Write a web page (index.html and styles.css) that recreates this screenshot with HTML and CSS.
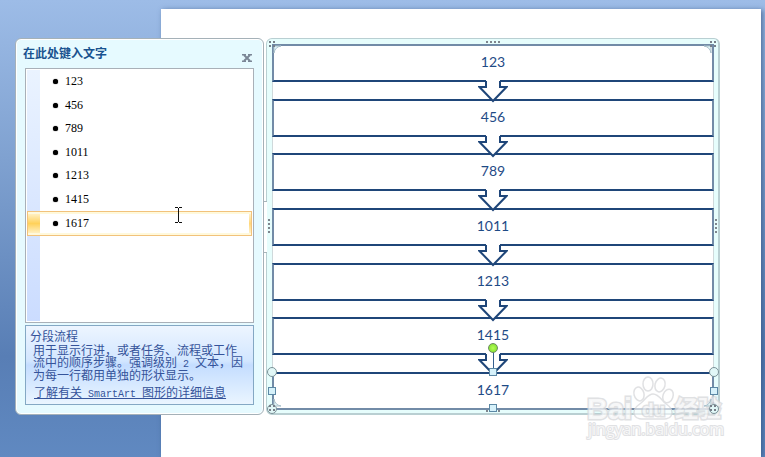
FILE: index.html
```html
<!DOCTYPE html>
<html lang="zh-CN">
<head>
<meta charset="utf-8">
<title>SmartArt</title>
<link rel="stylesheet" href="styles.css">
</head>
<body>
<div class="sheet"></div>
<main class="workspace">
  <section class="pane">
    <header class="pane-head">
      <h1>在此处键入文字</h1>
      <button class="close" type="button" aria-label="关闭">
        <svg width="10" height="8" viewBox="0 0 10 8"><path d="M0 .7h4M6 .7h4M0 7.300h4M6 7.300h4" stroke="#7b8696" stroke-width="1.400"/><path d="M2 1l6 6M8 1l-6 6" stroke="#7b8696" stroke-width="2"/></svg>
      </button>
    </header>
    <div class="editor">
      <ul class="bullets">
        <li>123</li>
        <li>456</li>
        <li>789</li>
        <li>1011</li>
        <li>1213</li>
        <li>1415</li>
        <li class="active">1617</li>
      </ul>
      <svg class="caret" width="7" height="16" viewBox="0 0 7 16"><path d="M0 .5h3M4 .5h3M3.500 1v14M0 15.500h3M4 15.500h3" stroke="#111" fill="none"/></svg>
    </div>
    <div class="info">
      <h2>分段流程</h2>
      <p>用于显示行进，或者任务、流程或工作<br>流中的顺序步骤。强调级别<span class="latin"> 2 </span>文本，因<br>为每一行都用单独的形状显示。</p>
      <a href="#">了解有关<span class="latin"> SmartArt </span>图形的详细信息</a>
    </div>
  </section>
  <section class="frame">
    <ol class="steps">
      <li>123<svg class="arrow" viewBox="0 0 30 23"><use href="#arrow"/></svg></li>
      <li>456<svg class="arrow" viewBox="0 0 30 23"><use href="#arrow"/></svg></li>
      <li>789<svg class="arrow" viewBox="0 0 30 23"><use href="#arrow"/></svg></li>
      <li>1011<svg class="arrow" viewBox="0 0 30 23"><use href="#arrow"/></svg></li>
      <li>1213<svg class="arrow" viewBox="0 0 30 23"><use href="#arrow"/></svg></li>
      <li>1415<svg class="arrow" viewBox="0 0 30 23"><use href="#arrow"/></svg></li>
      <li class="selected">1617
        <i class="stem"></i><i class="rotate"></i>
        <i class="handle square n"></i><i class="handle square s"></i>
        <i class="handle square w"></i><i class="handle square e"></i>
        <i class="handle round nw"></i><i class="handle round ne"></i>
        <i class="handle round sw"></i><i class="handle round se"></i>
      </li>
    </ol>
    <i class="nub"></i>
    <svg class="grip top" width="15" height="3"><use href="#dots"/></svg>
    <svg class="grip bottom" width="15" height="3"><use href="#dots"/></svg>
    <svg class="grip left" width="3" height="15"><use href="#vdots"/></svg>
    <svg class="grip right" width="3" height="15"><use href="#vdots"/></svg>
    <svg class="corner tl" width="12" height="12"><use href="#corner"/></svg>
    <svg class="corner tr" width="12" height="12"><use href="#corner"/></svg>
    <svg class="corner bl" width="12" height="12"><use href="#corner"/></svg>
    <svg class="corner br" width="12" height="12"><use href="#corner"/></svg>
  </section>
</main>
<svg class="watermark" width="144" height="70" viewBox="0 0 144 70">
  <g fill="#fff" fill-opacity=".75" stroke="#d9dadd" stroke-width="1.500">
    <ellipse cx="56" cy="20" rx="5" ry="7" transform="rotate(-15 56 20)"/>
    <ellipse cx="65" cy="10" rx="5" ry="7"/>
    <ellipse cx="77" cy="11" rx="5" ry="7" transform="rotate(15 77 11)"/>
    <ellipse cx="85" cy="22" rx="5" ry="7" transform="rotate(20 85 22)"/>
    <path d="M70 20c-5 0-7 5-12 9-6 4-9 8-6 13 2 4 8 3 18 3s16 1 18-3c3-5 0-9-6-13-4-4-7-9-12-9z"/>
    <g paint-order="stroke" stroke-width="3">
      <text class="wm-bold" x="4" y="45" font-size="29">Bai</text>
      <text class="wm-bold" x="59" y="42" font-size="19">du</text>
      <text class="wm-cjk" x="92" y="43" font-size="23">经验</text>
      <text class="wm-url" x="5" y="61" font-size="16" stroke-width="2">jingyan.baidu.com</text>
    </g>
  </g>
</svg>
<svg width="0" height="0" class="defs">
  <defs>
    <g id="arrow"><path d="M8 0h14v4H8z" fill="#fff"/><path d="M8 1v6H1.500L15 21 28.500 7H22V1" fill="#fff" stroke="#1f4679" stroke-width="2"/></g>
    <path id="dots" d="M0 0h2v2H0zM4 0h2v2H4zM8 0h2v2H8zM12 0h2v2h-2z" fill="#7f858d"/>
    <path id="vdots" d="M0 0h2v2H0zM0 4h2v2H0zM0 8h2v2H0zM0 12h2v2H0z" fill="#7f858d"/>
    <g id="corner"><path d="M5 5h7Q6 6 5 12z" fill="#e4f8fa" stroke="#a9bfc9"/><path d="M0 0h2v2H0zM4 0h2v2H4zM0 4h2v2H0zM4 4h2v2H4z" fill="#777f89"/></g>
  </defs>
</svg>
</body>
</html>
```
FILE: styles.css
```css
* { box-sizing: border-box; }
body {
  margin: 0;
  min-height: 100vh;
  display: grid;
  grid-template: 9px 1fr / 161px 1fr 4px;
  overflow: hidden;
  background: linear-gradient(#9dbce7, #7fa1d0 35%, #587eb5 78%, #6089c1);
  font-family: "Liberation Serif", "Noto Sans CJK SC", serif;
  font-size: 12px;
}
h1, h2, p, ul, ol { margin: 0; padding: 0; font-weight: normal; }
ul, ol { list-style: none; }
.sheet {
  grid-area: 2 / 2;
  background: #fff;
  box-shadow: 2px 1px 5px #2b4a78aa;
}
.workspace {
  grid-area: 1 / 1 / -1 / -1;
  position: relative;
  display: flex;
  gap: 2px;
  padding: 38px 45px 42px 15px;
}

.pane {
  flex: 0 0 249px;
  display: flex;
  flex-direction: column;
  padding: 0 9px 9px;
  border: 1px solid #a5b1b8;
  border-radius: 6px;
  background: #e6faff;
  box-shadow: inset 0 0 0 1px #fff;
}
.pane-head {
  display: flex;
  justify-content: space-between;
  height: 29px;
  padding: 0 2px 0 0;
  margin-left: -2px;
}
.pane-head h1 {
  font: bold 12px/28px "Noto Sans CJK SC", sans-serif;
  color: #19528f;
}
.close {
  align-self: center;
  margin-top: 8px;
  padding: 0;
  border: 0;
  background: none;
}
.close svg { display: block; }
.editor {
  position: relative;
  flex: 1;
  padding: 1px;
  border: 1px solid #a9b0b8;
  background:
    linear-gradient(#eaf3ff, #cbdcff) 1px 1px / 13px calc(100% - 2px) no-repeat,
    #fff;
}
.bullets {
  display: flex;
  flex-direction: column;
  justify-content: space-between;
  height: 166px;
}
.bullets li {
  display: flex;
  align-items: center;
  gap: 7px;
  height: 23px;
  padding-left: 26px;
}
.bullets li::before {
  content: "";
  width: 5px;
  height: 5px;
  border-radius: 50%;
  background: #000;
  box-shadow: 0 0 1px #000;
}
.bullets .active {
  height: 25px;
  padding-left: 25px;
  border: 1px solid #f2c27b;
  background:
    linear-gradient(#fff6d8, #ffd15a, #fff6d8) left / 12px 100% no-repeat,
    linear-gradient(#fff6d8, #ffd77a, #fff6d8) right / 2px 100% no-repeat,
    #fff;
  box-shadow: inset 0 2px #fff9dc, inset 0 -2px #fff9dc;
}
.caret { position: absolute; left: 149px; top: 138px; }
.info {
  height: 80px;
  margin-top: 2px;
  padding: 2px 4px;
  border: 1px solid #84a8c4;
  background: linear-gradient(#edf5ff, #d2e6ff 45%, #c4ddff 50%, #eaf5ff);
  color: #35539a;
  font: 12px/12px "Noto Sans CJK SC", sans-serif;
  white-space: nowrap;
}
.info h2 { font-size: 12px; line-height: 16px; }
.info p { padding-left: 3px; }
.info a {
  display: inline-block;
  margin: 2px 0 0 4px;
  line-height: 18px;
  color: inherit;
}
.latin {
  font-family: "Liberation Mono", monospace;
  font-size: 10px;
  line-height: 8px;
  white-space: pre;
}

.frame {
  position: relative;
  flex: 1;
  display: flex;
  padding: 5px 4px 3px 5px;
  border: 1px solid #b9cfd2;
  border-width: 1px 2px 2px 1px;
  border-radius: 6px;
  background: #e6fdfc;
}
.steps {
  flex: 1;
  display: flex;
  flex-direction: column;
  justify-content: space-between;
  background: #fff;
  border: solid #cfd9db;
  border-width: 0 1px;
}
.steps li {
  position: relative;
  height: 38px;
  margin: 0 -1px;
  border: 2px solid #1f4679;
  border-left-color: #728ba7;
  border-right-color: #728ba7;
  color: #1f4b86;
  font: 14px/32px Lato, sans-serif;
  text-align: center;
}
.steps li:first-child { border-top-color: #728ba7; }
.arrow {
  position: absolute;
  z-index: 1;
  left: calc(50% - 15px);
  top: 34px;
  width: 30px;
  height: 23px;
}
.steps .selected { border-bottom-color: #728ba7; }
.stem, .rotate, .handle, .nub, .grip, .corner { position: absolute; }
.stem { z-index: 2; left: 50%; top: -22px; width: 1px; height: 22px; background: #355f90; }
.rotate {
  z-index: 2;
  left: calc(50% - 5px);
  top: -31px;
  width: 10px;
  height: 10px;
  border: 1px solid #6d8b60;
  border-radius: 50%;
  background: radial-gradient(#b4ff55, #78d82a);
}
.handle {
  z-index: 2;
  width: 8px;
  height: 8px;
  border: 1px solid #5c88a5;
  background: #d6f1fa;
}
.round { width: 10px; height: 10px; border-color: #7b9298; border-radius: 50%; background: #e1f7f7; }
.n { left: calc(50% - 4px); top: -6px; }
.s { left: calc(50% - 4px); bottom: -4px; }
.w { left: -6px; top: 13px; }
.e { right: -6px; top: 13px; }
.nw { left: -7px; top: -7px; }
.ne { right: -7px; top: -7px; }
.sw { left: -7px; bottom: -6px; }
.se { right: -7px; bottom: -6px; }
.nub {
  left: -3px;
  top: 162px;
  width: 3px;
  height: 52px;
  border: solid #a8b5ba;
  border-width: 1px 0;
  background: #fff;
}
.top { left: calc(50% - 7px); top: 2px; }
.bottom { left: calc(50% - 7px); bottom: 0; }
.left { left: 1px; top: calc(50% - 7px); }
.right { right: 0; top: calc(50% - 7px); }
.corner { z-index: 3; }
.tl { left: 2px; top: 2px; }
.tr { right: 2px; top: 2px; transform: scaleX(-1); }
.bl { left: 2px; bottom: 2px; transform: scaleY(-1); }
.br { right: 2px; bottom: 2px; transform: scale(-1); }

.watermark { position: absolute; right: 38px; bottom: 13px; opacity: .8; }
.wm-bold { font-family: "Liberation Sans", sans-serif; font-weight: bold; }
.wm-cjk { font-family: "Noto Sans CJK SC", sans-serif; font-weight: bold; }
.wm-url { font-family: "Open Sans", sans-serif; }
.defs { position: absolute; }
```
